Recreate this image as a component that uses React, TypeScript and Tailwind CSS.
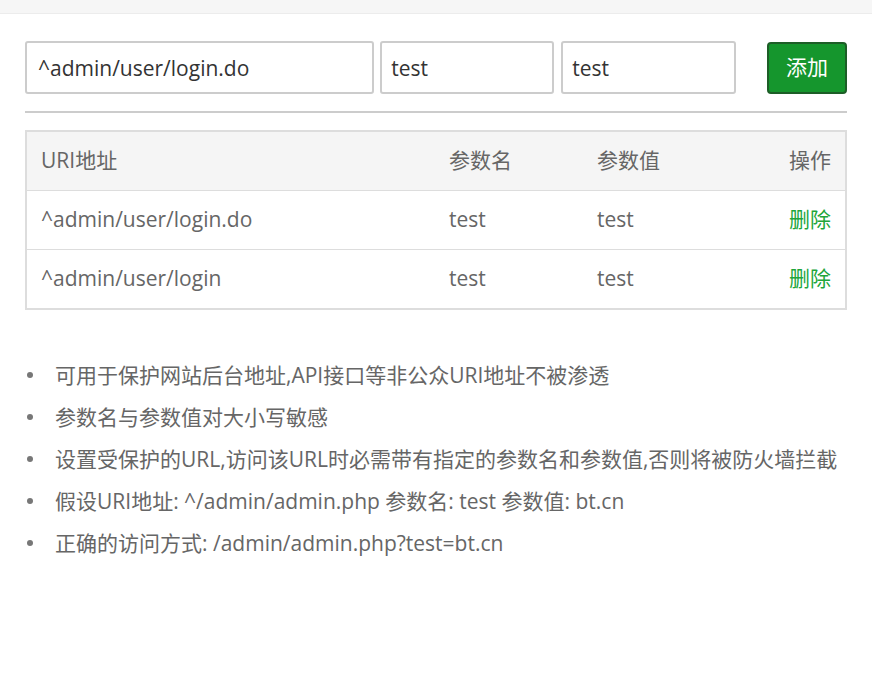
import React from 'react';

const rows = [
    { uri: '^admin/user/login.do', name: 'test', value: 'test' },
    { uri: '^admin/user/login', name: 'test', value: 'test' },
];

const tips = [
    '可用于保护网站后台地址,API接口等非公众URI地址不被渗透',
    '参数名与参数值对大小写敏感',
    '设置受保护的URL,访问该URL时必需带有指定的参数名和参数值,否则将被防火墙拦截',
    '假设URI地址: ^/admin/admin.php 参数名: test 参数值: bt.cn',
    '正确的访问方式: /admin/admin.php?test=bt.cn',
];

export default function App() {
    return (
        <div
            className="w-[872px] h-[694px] bg-white text-[21px] text-[#666]"
            style={{ fontFamily: '"Open Sans", "Noto Sans CJK SC", sans-serif' }}
        >
            {/* top strip */}
            <div className="h-[14px] bg-[#f6f6f6] border-b border-[#ececec]" />

            <div className="px-[25px] pt-[27px]">
                {/* form row */}
                <div className="flex items-center">
                    <input
                        className="w-[350px] h-[53px] border-2 border-[#ccc] rounded-[3px] px-[11px] text-[#333] outline-none"
                        defaultValue="^admin/user/login.do"
                    />
                    <input
                        className="ml-[6px] w-[174px] h-[53px] border-2 border-[#ccc] rounded-[3px] px-[9px] text-[#333] outline-none"
                        defaultValue="test"
                    />
                    <input
                        className="ml-[7px] w-[175px] h-[53px] border-2 border-[#ccc] rounded-[3px] px-[9px] text-[#333] outline-none"
                        defaultValue="test"
                    />
                    <button className="ml-[31px] w-[80px] h-[52px] bg-[#15962d] border-2 border-[#1d5e27] rounded-[4px] text-white">
                        添加
                    </button>
                </div>

                <div className="mt-[17px] h-[2px] bg-[#cccccc]" />

                {/* table */}
                <div className="mt-[17px] border-2 border-[#dddddd]">
                    <div className="flex items-center h-[58px] bg-[#f5f5f5] px-[14px]">
                        <div className="w-[408px]">URI地址</div>
                        <div className="w-[148px]">参数名</div>
                        <div className="flex-1">参数值</div>
                        <div>操作</div>
                    </div>
                    {rows.map((r, i) => (
                        <div key={i} className="flex items-center h-[59px] border-t border-[#dddddd] px-[14px]">
                            <div className="w-[408px]">{r.uri}</div>
                            <div className="w-[148px]">{r.name}</div>
                            <div className="flex-1">{r.value}</div>
                            <div className="text-[#20a53a]">删除</div>
                        </div>
                    ))}
                </div>

                {/* tips */}
                <ul className="mt-[50px] flex flex-col gap-[12px]">
                    {tips.map((t, i) => (
                        <li key={i} className="flex items-center h-[30px] leading-[30px]">
                            <span className="w-[6px] h-[6px] rounded-full bg-[#777] ml-[2px] mr-[22px]" />
                            {t}
                        </li>
                    ))}
                </ul>
            </div>
        </div>
    );
}
